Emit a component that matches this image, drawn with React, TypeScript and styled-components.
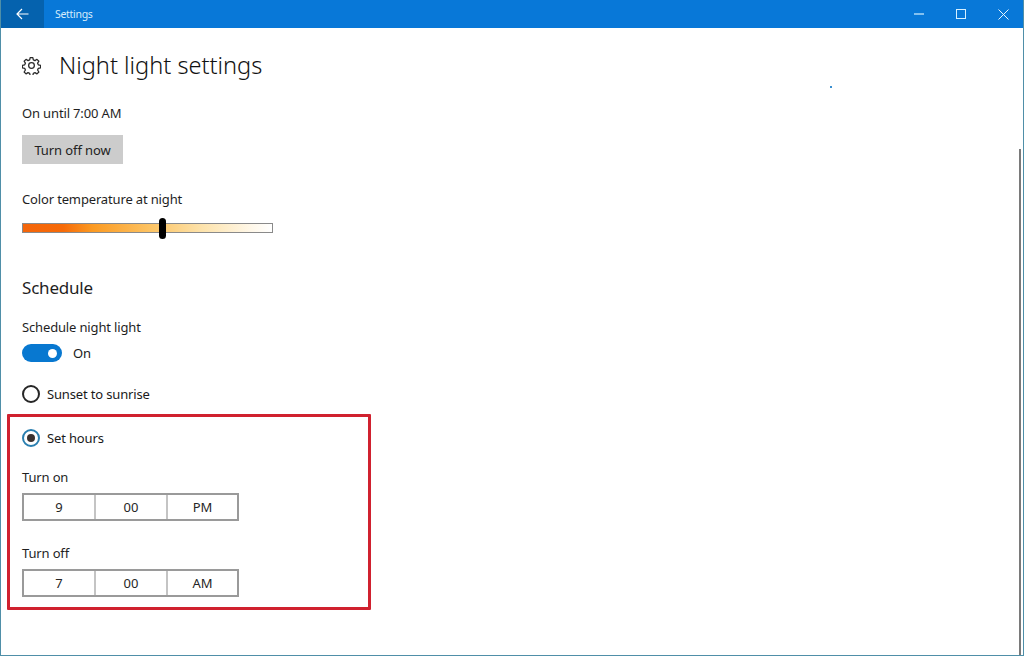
import React, { ReactElement } from 'react'
import styled, { createGlobalStyle } from 'styled-components'

const GlobalStyle = createGlobalStyle`
  html, body {
    margin: 0;
    padding: 0;
    background: #fff;
  }
  body {
    font-family: "Noto Sans", "Open Sans", "Liberation Sans", sans-serif;
    color: #1a1a1a;
  }
`

const Window = styled.div`
  position: relative;
  width: 1024px;
  height: 656px;
  box-sizing: border-box;
  border-left: 1px solid #4f8fa8;
  border-right: 1px solid #4f8fa8;
  border-bottom: 1px solid #4f8fa8;
  overflow: hidden;
  background: #fff;
`

const TitleBar = styled.header`
  height: 28px;
  background: #0878d8;
  display: flex;
  align-items: center;
  color: #fff;
`

const BackButton = styled.div`
  width: 43px;
  height: 28px;
  background: #0562ae;
  display: flex;
  align-items: center;
  justify-content: center;
`

const AppName = styled.span`
  margin-left: 11px;
  font-size: 10.5px;
  letter-spacing: -0.3px;
  color: #d6ecfb;
  flex: 1;
`

const WindowControls = styled.div`
  display: flex;
  align-items: center;
  margin-right: -1px;
`

const WindowControl = styled.div`
  width: 42px;
  height: 28px;
  display: flex;
  align-items: center;
  justify-content: center;
`

const Content = styled.main`
  padding-left: 21px;
  display: flex;
  flex-direction: column;
  align-items: flex-start;
`

const PageHeader = styled.div`
  display: flex;
  align-items: center;
  height: 36px;
  margin-top: 19px;
`

const PageTitle = styled.h1`
  margin: 0 0 0 18px;
  font-size: 23.6px;
  font-weight: 300;
  line-height: 36px;
  color: #111;
`

const Label = styled.div<{ $top: number }>`
  margin-top: ${(p) => p.$top}px;
  font-size: 13px;
  letter-spacing: -0.15px;
  line-height: 18px;
  color: #1f1f1f;
`

const FlatButton = styled.div`
  margin-top: 13px;
  width: 101px;
  height: 29px;
  background: #cccccc;
  font-size: 13px;
  letter-spacing: -0.1px;
  display: flex;
  align-items: center;
  justify-content: center;
  color: #222;
`

const TempSlider = styled.div`
  position: relative;
  margin-top: 15px;
  width: 249px;
  height: 8px;
  border: 1px solid #8a8a8a;
  background: linear-gradient(
    90deg,
    #f4650a 0%,
    #f66a08 16%,
    #fb9a22 28%,
    #fdc566 52%,
    #fde3ac 72%,
    #fff8ea 92%,
    #ffffff 100%
  );
`

const SliderThumb = styled.div`
  position: absolute;
  left: 136px;
  top: -6px;
  width: 7px;
  height: 21px;
  border-radius: 4px;
  background: #000;
`

const SectionTitle = styled.h2`
  margin: 43px 0 0;
  font-size: 17px;
  font-weight: 400;
  letter-spacing: -0.2px;
  line-height: 24px;
  color: #1f1f1f;
`

const ToggleRow = styled.div`
  margin-top: 8px;
  display: flex;
  align-items: center;
  gap: 11px;
  font-size: 13px;
  letter-spacing: -0.15px;
  line-height: 18px;
`

const ToggleTrack = styled.div`
  width: 40px;
  height: 18px;
  border-radius: 9px;
  background: #0878d0;
  display: flex;
  align-items: center;
  justify-content: flex-end;
  padding-right: 5px;
  box-sizing: border-box;
`

const ToggleKnob = styled.div`
  width: 9px;
  height: 9px;
  border-radius: 50%;
  background: #fff;
`

const RadioRow = styled.div<{ $top: number }>`
  margin-top: ${(p) => p.$top}px;
  display: flex;
  align-items: center;
  gap: 7px;
  font-size: 13px;
  letter-spacing: -0.15px;
  line-height: 18px;
`

const RadioCircle = styled.div<{ $checked?: boolean }>`
  width: 18px;
  height: 18px;
  box-sizing: border-box;
  border-radius: 50%;
  border: 2px solid ${(p) => (p.$checked ? '#2a7fb0' : '#262626')};
  display: flex;
  align-items: center;
  justify-content: center;
`

const RadioDot = styled.div`
  width: 8px;
  height: 8px;
  border-radius: 50%;
  background: #3a3230;
`

const Highlight = styled.section`
  margin: 11px 0 0 -15px;
  width: 364px;
  height: 196px;
  box-sizing: border-box;
  border: 3px solid #d0212f;
  border-radius: 1px;
  padding: 12px 0 0 12px;
  display: flex;
  flex-direction: column;
  align-items: flex-start;
`

const TimePicker = styled.div`
  margin-top: 7px;
  width: 217px;
  height: 28px;
  box-sizing: border-box;
  border: 2px solid #9a9a9a;
  display: grid;
  grid-template-columns: 70px 72px 1fr;
`

const TimeCell = styled.div`
  display: flex;
  align-items: center;
  justify-content: center;
  font-size: 13px;
  color: #262626;
  & + & {
    border-left: 2px solid #c4c4c4;
  }
`

const ScrollIndicator = styled.div`
  position: absolute;
  right: 2px;
  top: 149px;
  bottom: 0;
  width: 2px;
  background: #7a7a7a;
`

const Speck = styled.div`
  position: absolute;
  left: 829px;
  top: 86px;
  width: 2px;
  height: 2px;
  background: #3a8fd0;
`

const slots = [
  { label: 'Turn on', top: 21, cells: ['9', '00', 'PM'] },
  { label: 'Turn off', top: 23, cells: ['7', '00', 'AM'] },
]

function Gear(): ReactElement {
  return (
    <svg width="19" height="19" viewBox="0 0 24 24" fill="none" stroke="#2a2a2a" strokeWidth="1.6" strokeLinejoin="round">
      <path d="M10.3 2h3.4l.6 2.9 2.1.9 2.5-1.6 2.4 2.4-1.6 2.5.9 2.1 2.9.6v3.2l-2.9.6-.9 2.1 1.6 2.5-2.4 2.4-2.5-1.6-2.1.9-.6 2.9h-3.4l-.6-2.9-2.1-.9-2.5 1.6-2.4-2.4 1.6-2.5-.9-2.1-2.9-.6v-3.2l2.9-.6.9-2.1-1.6-2.5 2.4-2.4 2.5 1.6 2.1-.9z" />
      <circle cx="12" cy="12" r="3.6" />
    </svg>
  )
}

export default function App(): ReactElement {
  return (
    <>
      <GlobalStyle />
      <Window>
        <TitleBar>
          <BackButton>
            <svg width="13" height="12" viewBox="0 0 13 12" fill="none" stroke="#fff" strokeWidth="1.2">
              <path d="M12.5 6H1M6 1 1 6l5 5" />
            </svg>
          </BackButton>
          <AppName>Settings</AppName>
          <WindowControls>
            <WindowControl>
              <svg width="10" height="10" viewBox="0 0 10 10" stroke="#d6f0ff" strokeWidth="1.2">
                <path d="M0 5h10" />
              </svg>
            </WindowControl>
            <WindowControl>
              <svg width="10" height="10" viewBox="0 0 10 10" fill="none" stroke="#d6f0ff" strokeWidth="1">
                <rect x="0.5" y="0.5" width="9" height="9" />
              </svg>
            </WindowControl>
            <WindowControl>
              <svg width="11" height="11" viewBox="0 0 11 11" stroke="#e6f5ff" strokeWidth="1">
                <path d="M.5.5l10 10M10.5.5l-10 10" />
              </svg>
            </WindowControl>
          </WindowControls>
        </TitleBar>
        <Content>
          <PageHeader>
            <Gear />
            <PageTitle>Night light settings</PageTitle>
          </PageHeader>
          <Label $top={21}>On until 7:00 AM</Label>
          <FlatButton>Turn off now</FlatButton>
          <Label $top={26}>Color temperature at night</Label>
          <TempSlider>
            <SliderThumb />
          </TempSlider>
          <SectionTitle>Schedule</SectionTitle>
          <Label $top={18}>Schedule night light</Label>
          <ToggleRow>
            <ToggleTrack>
              <ToggleKnob />
            </ToggleTrack>
            On
          </ToggleRow>
          <RadioRow $top={23}>
            <RadioCircle />
            Sunset to sunrise
          </RadioRow>
          <Highlight>
            <RadioRow $top={0}>
              <RadioCircle $checked>
                <RadioDot />
              </RadioCircle>
              Set hours
            </RadioRow>
            {slots.map((slot) => (
              <React.Fragment key={slot.label}>
                <Label $top={slot.top}>{slot.label}</Label>
                <TimePicker>
                  {slot.cells.map((cell) => (
                    <TimeCell key={cell}>{cell}</TimeCell>
                  ))}
                </TimePicker>
              </React.Fragment>
            ))}
          </Highlight>
        </Content>
        <Speck />
        <ScrollIndicator />
      </Window>
    </>
  )
}
